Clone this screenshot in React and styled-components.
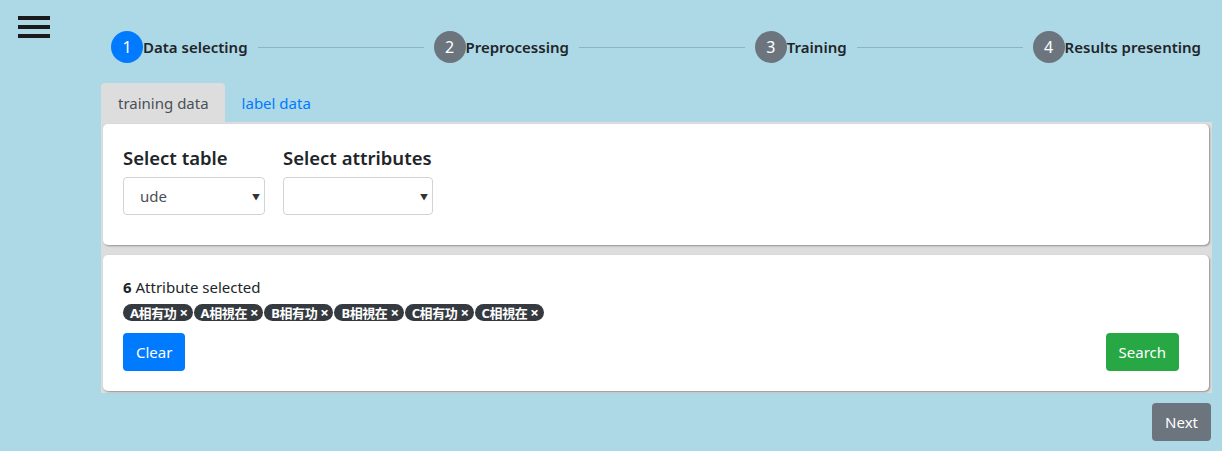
import React from "react";
import styled, { createGlobalStyle } from "styled-components";

const GlobalStyle = createGlobalStyle`
  body {
    margin: 0;
    background: #add8e6;
    font-family: "Noto Sans", "Noto Sans CJK SC", sans-serif;
    font-size: 15px;
    color: #212529;
  }
`;

const steps = ["Data selecting", "Preprocessing", "Training", "Results presenting"];
const attributes = ["A相有功", "A相視在", "B相有功", "B相視在", "C相有功", "C相視在"];

const Page = styled.div`
  display: flex;
  min-height: 451px;
`;

const Sidebar = styled.div`
  width: 101px;
  flex-shrink: 0;
  padding: 16px 0 0 18px;
  box-sizing: border-box;
`;

const Burger = styled.div`
  width: 32px;
  display: flex;
  flex-direction: column;
  gap: 5px;
  cursor: pointer;
`;

const BurgerBar = styled.span`
  display: block;
  height: 4px;
  background: #1a1a1a;
`;

const Main = styled.div`
  flex: 1;
  padding-right: 10px;
  display: flex;
  flex-direction: column;
`;

const Stepper = styled.div`
  display: flex;
  align-items: center;
  margin-top: 31px;
  padding: 0 11px 0 10px;
  height: 32px;
`;

const Step = styled.div`
  display: flex;
  align-items: center;
  flex-shrink: 0;
`;

const StepCircle = styled.span`
  width: 32px;
  height: 32px;
  border-radius: 50%;
  background: ${(p) => (p.$active ? "#007bff" : "#6c757d")};
  color: #fff;
  font-size: 16px;
  display: flex;
  align-items: center;
  justify-content: center;
`;

const StepLabel = styled.span`
  font-size: 15px;
  font-weight: 600;
  color: #212529;
`;

const StepLine = styled.div`
  flex: 1;
  height: 1px;
  background: #8fb3c2;
  margin: 0 10px;
`;

const Tabs = styled.div`
  display: flex;
  margin-top: 20px;
`;

const Tab = styled.div`
  padding: 0 16px 0 17px;
  height: 39px;
  display: flex;
  align-items: center;
  font-size: 15px;
  border-radius: 4px 4px 0 0;
  background: ${(p) => (p.$active ? "#dddddd" : "transparent")};
  color: ${(p) => (p.$active ? "#495057" : "#007bff")};
  cursor: pointer;
`;

const Panel = styled.div`
  background: #dddddd;
  padding: 2px 3px 2px 2px;
  display: flex;
  flex-direction: column;
  gap: 10px;
`;

const Card = styled.div`
  background: #fff;
  border-radius: 5px;
  box-shadow: 1px 1px 2px rgba(0, 0, 0, 0.35);
  padding: 20px 30px 20px 20px;
`;

const FieldRow = styled.div`
  display: flex;
  gap: 18px;
  padding-top: 2px;
  padding-bottom: 10px;
`;

const Field = styled.div`
  display: flex;
  flex-direction: column;
  gap: 7px;
`;

const FieldTitle = styled.div`
  font-size: 18.5px;
  font-weight: 600;
  line-height: 24px;
`;

const SelectBox = styled.div`
  width: ${(p) => p.$w}px;
  height: 38px;
  box-sizing: border-box;
  border: 1px solid #ced4da;
  border-radius: 4px;
  display: flex;
  align-items: center;
  justify-content: space-between;
  padding: 0 4px 0 16px;
  font-size: 15px;
  color: #495057;
`;

const Caret = styled.span`
  font-size: 8px;
  color: #333;
`;

const Count = styled.div`
  font-size: 15px;
  line-height: 24px;
`;

const BadgeRow = styled.div`
  display: flex;
  gap: 1px;
  margin-top: 5px;
`;

const Badge = styled.span`
  background: #343a40;
  color: #fff;
  font-size: 13px;
  font-weight: 700;
  line-height: 17px;
  height: 17px;
  padding: 0 5px 0 7px;
  border-radius: 9px;
  white-space: nowrap;
  letter-spacing: -0.4px;
  font-family: "Noto Sans", "Noto Sans CJK TC", sans-serif;
`;

const Remove = styled.span`
  font-size: 15px;
  margin-left: 3px;
  cursor: pointer;
`;

const ButtonRow = styled.div`
  display: flex;
  justify-content: space-between;
  margin-top: 12px;
`;

const Button = styled.button`
  height: 38px;
  padding: 0 13px;
  border: none;
  border-radius: 4px;
  font-family: inherit;
  font-size: 15px;
  color: #fff;
  background: ${(p) => p.$bg};
  cursor: pointer;
`;

const Footer = styled.div`
  display: flex;
  justify-content: flex-end;
  margin-top: 10px;
  margin-right: 1px;
`;

export default function App() {
  return (
    <Page>
      <GlobalStyle />
      <Sidebar>
        <Burger>
          <BurgerBar />
          <BurgerBar />
          <BurgerBar />
        </Burger>
      </Sidebar>
      <Main>
        <Stepper>
          {steps.map((s, i) => (
            <React.Fragment key={s}>
              {i > 0 && <StepLine />}
              <Step>
                <StepCircle $active={i === 0}>{i + 1}</StepCircle>
                <StepLabel>{s}</StepLabel>
              </Step>
            </React.Fragment>
          ))}
        </Stepper>
        <Tabs>
          <Tab $active>training data</Tab>
          <Tab>label data</Tab>
        </Tabs>
        <Panel>
          <Card>
            <FieldRow>
              <Field>
                <FieldTitle>Select table</FieldTitle>
                <SelectBox $w={142}>
                  ude<Caret>▼</Caret>
                </SelectBox>
              </Field>
              <Field>
                <FieldTitle>Select attributes</FieldTitle>
                <SelectBox $w={150}>
                  <span />
                  <Caret>▼</Caret>
                </SelectBox>
              </Field>
            </FieldRow>
          </Card>
          <Card>
            <Count>
              <b>6</b> Attribute selected
            </Count>
            <BadgeRow>
              {attributes.map((a) => (
                <Badge key={a}>
                  {a}
                  <Remove>×</Remove>
                </Badge>
              ))}
            </BadgeRow>
            <ButtonRow>
              <Button $bg="#007bff">Clear</Button>
              <Button $bg="#28a745">Search</Button>
            </ButtonRow>
          </Card>
        </Panel>
        <Footer>
          <Button $bg="#6c757d">Next</Button>
        </Footer>
      </Main>
    </Page>
  );
}
